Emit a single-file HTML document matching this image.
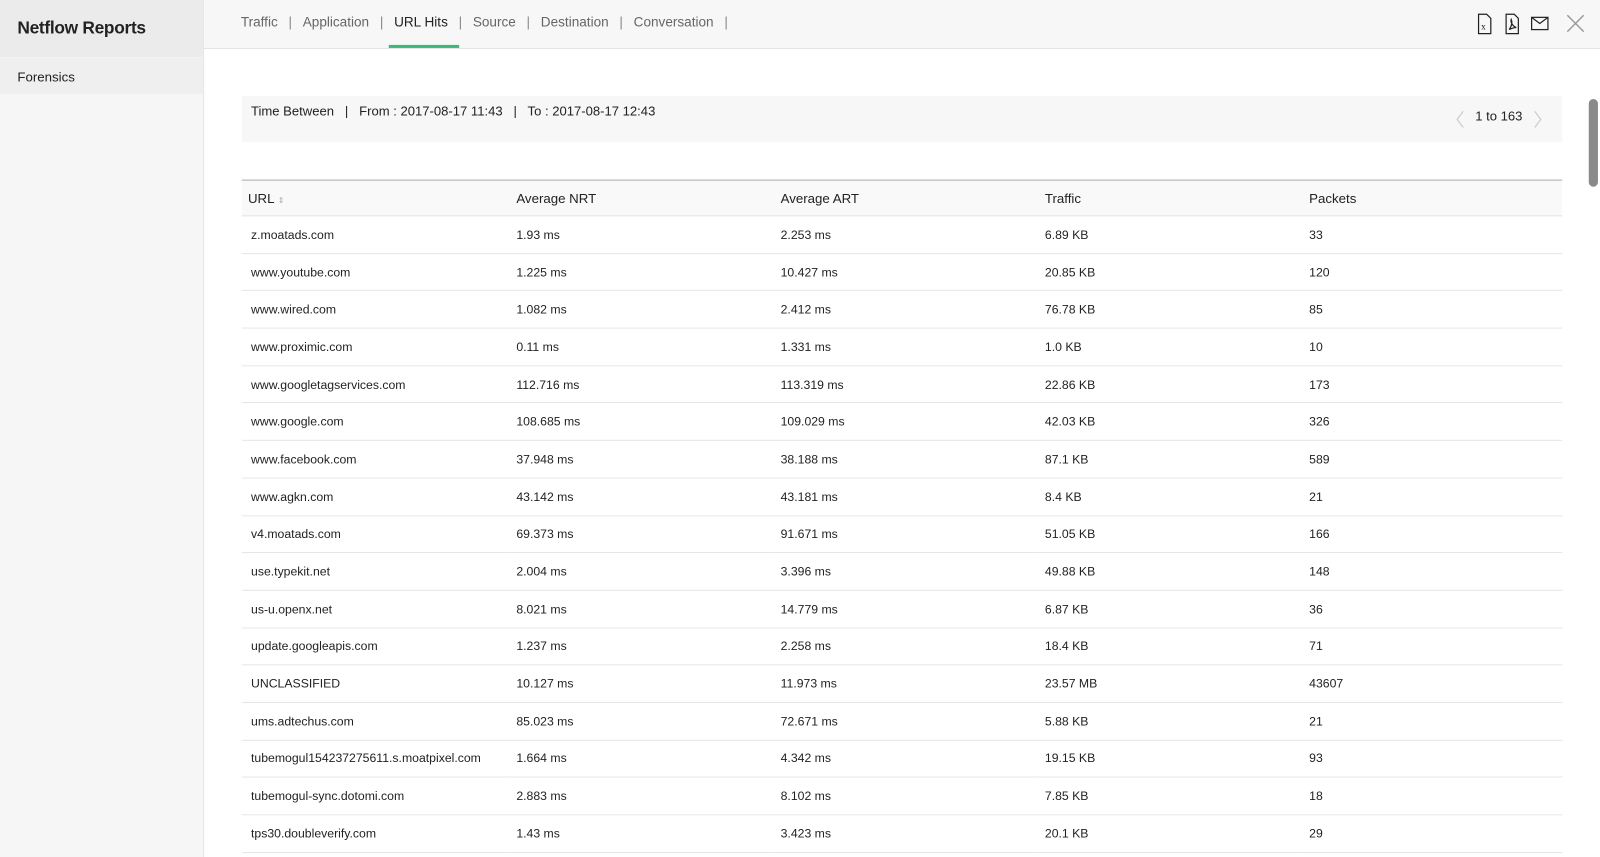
<!DOCTYPE html>
<html><head><meta charset="utf-8"><style>
*{margin:0;padding:0;box-sizing:border-box}
body{width:1600px;height:853px;overflow:hidden;font-family:"Liberation Sans",sans-serif;background:#fff;color:#222}
#w{position:relative;width:1568px;height:836px;transform:scale(1.0204);transform-origin:0 0}
.side{position:absolute;left:0;top:0;width:200px;height:840px;background:#f6f6f6;border-right:1px solid #e6e6e6}
.side .h{height:56px;background:#ebebeb;font-size:17px;font-weight:bold;padding:18px 0 0 17px;letter-spacing:-0.3px}
.side .f{height:35px;background:#efefef;font-size:13px;padding:11px 0 0 17px;margin-top:1px}
.top{position:absolute;left:200px;top:0;width:1368px;height:48px;background:#f7f7f8;border-bottom:1px solid #e4e4e4}
.tabs{position:absolute;left:36px;top:14px;font-size:13.3px;color:#666;white-space:nowrap}
.tabs span.s{color:#888;margin:0 10.5px}
.tabs .a{color:#222}
.ul{position:absolute;left:181px;top:44px;width:69px;height:3px;background:#3cb878}
.filter{position:absolute;left:237px;top:94px;width:1294px;height:45px;background:#f7f7f7;font-size:12.8px}
.filter .t{position:absolute;left:9px;top:7px}
.filter .p{position:absolute;right:39px;top:12px}
table{position:absolute;left:237px;top:176px;width:1294px;border-collapse:collapse;font-size:12px}
th{text-align:left;font-weight:normal;font-size:13px;height:35px;background:#f9f9f9;border-top:1px solid #aaa;border-bottom:1px solid #e4e4e4;padding-left:9px}
th:first-child{padding-left:6px}
td{height:36.7px;border-bottom:1px solid #e6e6e6;padding-left:9px}
th:nth-child(1){width:260px}th:nth-child(2),th:nth-child(3),th:nth-child(4){width:259px}
.sb{position:absolute;left:1557px;top:97px;width:9px;height:86px;background:#8a8a8a;border-radius:5px}
</style></head><body><div id="w">
<div class="side"><div class="h">Netflow Reports</div><div class="f">Forensics</div></div>
<div class="top">
<div class="tabs">Traffic<span class="s">|</span>Application<span class="s">|</span><span class="a">URL Hits</span><span class="s">|</span>Source<span class="s">|</span>Destination<span class="s">|</span>Conversation<span class="s">|</span></div>
<div class="ul"></div>
<svg style="position:absolute;left:1246px;top:13px" width="120" height="22" fill="none" stroke="#222" stroke-width="1.2">
<path d="M3 1h8l4 4v15H3z"/><text x="5.5" y="16" font-size="9" font-family="Liberation Serif" fill="#222" stroke="none">x</text>
<path d="M30 1h8l4 4v15H30z"/><path d="M33 16c3-4 3-8 2-10c-1 3 2 7 5 8c-3 0-5 1-7 2"/>
<rect x="55" y="4" width="16" height="12"/><path d="M55 4l8 6l8-6"/>
<path d="M90 2l16 16M106 2L90 18" stroke="#999" stroke-width="1.4"/>
</svg>
</div>
<div class="filter"><div class="t">Time Between &nbsp;&nbsp;|&nbsp;&nbsp; From : 2017-08-17 11:43 &nbsp;&nbsp;|&nbsp;&nbsp; To : 2017-08-17 12:43</div>
<svg style="position:absolute;left:1189px;top:14px" width="10" height="18"><path d="M8 1L2 9l6 8" fill="none" stroke="#ccc" stroke-width="1.2"/></svg>
<div class="p">1 to 163</div>
<svg style="position:absolute;left:1265px;top:14px" width="10" height="18"><path d="M2 1l6 8-6 8" fill="none" stroke="#ccc" stroke-width="1.2"/></svg>
</div>
<table>
<tr><th>URL <span style="font-size:8px;color:#aaa">&#8661;</span></th><th>Average NRT</th><th>Average ART</th><th>Traffic</th><th>Packets</th></tr>
<tr><td>z.moatads.com</td><td>1.93 ms</td><td>2.253 ms</td><td>6.89 KB</td><td>33</td></tr>
<tr><td>www.youtube.com</td><td>1.225 ms</td><td>10.427 ms</td><td>20.85 KB</td><td>120</td></tr>
<tr><td>www.wired.com</td><td>1.082 ms</td><td>2.412 ms</td><td>76.78 KB</td><td>85</td></tr>
<tr><td>www.proximic.com</td><td>0.11 ms</td><td>1.331 ms</td><td>1.0 KB</td><td>10</td></tr>
<tr><td>www.googletagservices.com</td><td>112.716 ms</td><td>113.319 ms</td><td>22.86 KB</td><td>173</td></tr>
<tr><td>www.google.com</td><td>108.685 ms</td><td>109.029 ms</td><td>42.03 KB</td><td>326</td></tr>
<tr><td>www.facebook.com</td><td>37.948 ms</td><td>38.188 ms</td><td>87.1 KB</td><td>589</td></tr>
<tr><td>www.agkn.com</td><td>43.142 ms</td><td>43.181 ms</td><td>8.4 KB</td><td>21</td></tr>
<tr><td>v4.moatads.com</td><td>69.373 ms</td><td>91.671 ms</td><td>51.05 KB</td><td>166</td></tr>
<tr><td>use.typekit.net</td><td>2.004 ms</td><td>3.396 ms</td><td>49.88 KB</td><td>148</td></tr>
<tr><td>us-u.openx.net</td><td>8.021 ms</td><td>14.779 ms</td><td>6.87 KB</td><td>36</td></tr>
<tr><td>update.googleapis.com</td><td>1.237 ms</td><td>2.258 ms</td><td>18.4 KB</td><td>71</td></tr>
<tr><td>UNCLASSIFIED</td><td>10.127 ms</td><td>11.973 ms</td><td>23.57 MB</td><td>43607</td></tr>
<tr><td>ums.adtechus.com</td><td>85.023 ms</td><td>72.671 ms</td><td>5.88 KB</td><td>21</td></tr>
<tr><td>tubemogul154237275611.s.moatpixel.com</td><td>1.664 ms</td><td>4.342 ms</td><td>19.15 KB</td><td>93</td></tr>
<tr><td>tubemogul-sync.dotomi.com</td><td>2.883 ms</td><td>8.102 ms</td><td>7.85 KB</td><td>18</td></tr>
<tr><td>tps30.doubleverify.com</td><td>1.43 ms</td><td>3.423 ms</td><td>20.1 KB</td><td>29</td></tr>
</table>
<div class="sb"></div>
</div></body></html>
